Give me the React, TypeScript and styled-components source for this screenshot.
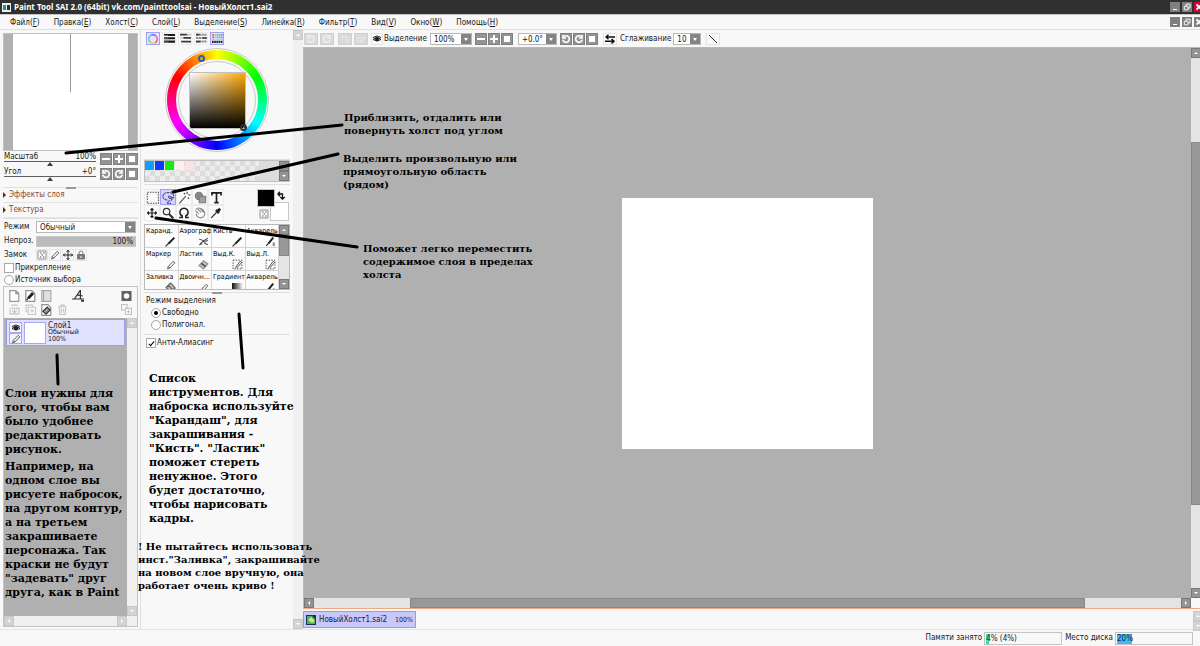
import React from "react";
import styled, { createGlobalStyle, css } from "styled-components";

const ui = `"DejaVu Sans Condensed", "DejaVu Sans", sans-serif`;
const serif = `"DejaVu Serif", serif`;

const Global = createGlobalStyle`
  *, *::before, *::after { box-sizing: border-box; }
  body { margin: 0; background: #f8f8f8; }
  button, input, select { font: inherit; color: inherit; margin: 0; padding: 0; }
  p, h1, h2 { margin: 0; font: inherit; }
  svg { display: block; flex: none; }
`;

const Shell = styled.div`
  position: relative;
  display: flex;
  flex-direction: column;
  min-height: 100vh;
  overflow: hidden;
  background: #f8f8f8;
  color: #202020;
  font: 8px/12px ${ui};
  white-space: nowrap;
`;

const TitleBar = styled.header`
  display: flex;
  align-items: center;
  gap: 3px;
  height: 14px;
  padding-left: 2px;
  background: #303030;
  color: #fff;
  font-family: "Noto Sans", ${ui};
  font-weight: bold;
`;
const WindowButtons = styled.div`
  display: flex;
  gap: 2px;
  margin: 0 -4px 0 auto;
`;
const WindowButton = styled.button<{ $close?: boolean }>`
  width: 10px;
  height: 10px;
  border: 0;
  background: ${(p) => (p.$close ? "#c80838" : "#808080")};
  color: #fff;
`;

const MenuBar = styled.nav`
  display: flex;
  align-items: center;
  height: 16px;
  padding-left: 3px;
  border-top: 1px solid #c4c4c4;
  border-bottom: 1px solid #e0e0e0;
`;
const MenuItem = styled.button`
  padding: 1px 7px 0;
  border: 0;
  background: none;
`;

const Workspace = styled.div`
  display: flex;
  flex: 1;
  border-bottom: 1px solid #e4e4e4;
`;
const LeftColumn = styled.aside`
  display: flex;
  flex-direction: column;
  flex: none;
  width: 141px;
  padding: 3px 2px 2px 3px;
  border-right: 1px solid #e0e0e0;
`;
const ToolColumn = styled.aside`
  display: flex;
  flex: none;
  width: 162px;
`;
const ToolPanel = styled.div`
  flex: 1;
  padding: 2px 3px 0;
`;
const MainColumn = styled.main`
  display: flex;
  flex: 1;
  flex-direction: column;
  min-width: 0;
`;

const Rule = styled.div<{ $handle?: boolean; $m?: string }>`
  display: flex;
  justify-content: center;
  align-items: center;
  height: 1px;
  margin: ${(p) => p.$m ?? "0"};
  background: #e0e0e0;
  ${(p) => p.$handle && css`
    &::after { content: ""; width: 10px; height: 2px; flex: none; background: #989898; }
  `}
`;

const SquareButton = styled.button<{ $tone?: "dark" | "light" | "off"; $wide?: boolean }>`
  display: flex;
  align-items: center;
  justify-content: center;
  flex: none;
  width: ${(p) => (p.$wide ? 14 : 12)}px;
  height: 12px;
  border: 1px solid ${(p) => (p.$tone === "off" ? "#d0d0d0" : p.$tone === "light" ? "#e4e4e4" : "#808080")};
  background: ${(p) => (p.$tone === "off" ? "#dadada" : p.$tone === "light" ? "#fafafa" : "#949494")};
  color: ${(p) => (p.$tone === "off" ? "#eee" : p.$tone === "light" ? "#303030" : "#fff")};
`;

const Navigator = styled.div`
  height: 118px;
  padding: 0 9px;
  border: 1px solid #c0c0c0;
  background: #b0b0b0;
`;
const NavigatorPage = styled.div`
  display: flex;
  justify-content: center;
  height: 100%;
  background: #fff;
  &::after { content: ""; width: 1px; height: 58px; background: #989898; }
`;
const SliderRow = styled.div`
  display: flex;
  gap: 1px;
  height: 15px;
  padding: 2px 0 0 1px;
`;
const Slider = styled.label`
  position: relative;
  display: flex;
  justify-content: space-between;
  flex: 1;
  height: 9px;
  margin-right: 3px;
  border-bottom: 1px solid #606060;
  line-height: 8px;
`;
const SliderInput = styled.input`
  appearance: none;
  position: absolute;
  left: 0;
  top: 9px;
  width: 100%;
  height: 4px;
  background: none;
  &::-webkit-slider-thumb {
    appearance: none;
    width: 6px;
    height: 4px;
    background: #404040;
    clip-path: polygon(50% 0, 100% 100%, 0 100%);
  }
`;
const Fold = styled.button`
  display: flex;
  align-items: center;
  gap: 3px;
  width: 100%;
  height: 15px;
  border: 0;
  border-bottom: 1px solid #e4e4e4;
  background: none;
  color: #904828;
  text-align: left;
  &::before {
    content: "";
    border-left: 3px solid #702810;
    border-top: 3px solid transparent;
    border-bottom: 3px solid transparent;
  }
`;
const Field = styled.label`
  display: grid;
  grid-template-columns: 31px 1fr;
  align-items: center;
  gap: 1px;
  height: 14px;
  padding: 0 2px 0 1px;
`;
const SelectBox = styled.span<{ $w?: number }>`
  position: relative;
  display: flex;
  flex: none;
  width: ${(p) => (p.$w ? `${p.$w}px` : "auto")};
  height: 12px;
  border: 1px solid #b8b8b8;
  background: #fff;
  &::after {
    content: "";
    position: absolute;
    right: 3px;
    top: 4px;
    border-top: 3px solid #fff;
    border-left: 2px solid transparent;
    border-right: 2px solid transparent;
    pointer-events: none;
  }
  select {
    appearance: none;
    width: 100%;
    padding-left: 3px;
    border: 0;
    border-radius: 0;
    background: linear-gradient(#848484, #848484) right / 10px 10px no-repeat;
  }
`;
const OpacityBar = styled.output`
  height: 11px;
  padding-right: 2px;
  border: 1px solid #c8c8c8;
  background: #bcbcbc;
  text-align: right;
  line-height: 9px;
`;
const LockRow = styled.div`
  display: flex;
  align-items: center;
  gap: 1px;
  height: 14px;
  padding-left: 1px;
  > span { width: 31px; }
`;
const Choice = styled.label<{ $indent?: number }>`
  display: flex;
  align-items: center;
  gap: 1px;
  height: 12px;
  padding-left: ${(p) => p.$indent ?? 1}px;
  input {
    appearance: none;
    flex: none;
    display: grid;
    place-items: center;
    width: 10px;
    height: 10px;
    border: 1px solid #a8a8a8;
    background: #fff;
  }
  input[type="radio"] { border-radius: 50%; }
  input[type="radio"]:checked::after {
    content: ""; width: 4px; height: 4px; border-radius: 50%; background: #000;
  }
  input[type="checkbox"]:checked::after {
    content: ""; width: 3px; height: 6px; border: solid #000; border-width: 0 1px 1px 0; transform: rotate(40deg);
  }
`;

const LayerPanel = styled.section`
  display: flex;
  flex: 1;
  flex-direction: column;
  border: 1px solid #c4c4c4;
`;
const LayerTools = styled.div`
  display: grid;
  grid-template-columns: repeat(4, 16px) 16px 1fr;
  align-content: center;
  height: 31px;
  padding: 0 4px 0 3px;
  button:nth-child(4) { grid-column: 5; }
  button:nth-child(5n) { justify-self: end; grid-column: 6; }
`;
const PlainButton = styled.button`
  display: flex;
  align-items: center;
  justify-content: center;
  width: 14px;
  height: 14px;
  border: 0;
  background: none;
`;
const LayerBody = styled.div`
  display: flex;
  flex: 1;
`;
const LayerList = styled.div`
  flex: 1;
  padding: 1px 2px;
  background: #b0b0b0;
`;
const Layer = styled.div`
  display: flex;
  gap: 2px;
  height: 27px;
  padding: 2px;
  border: 1px solid #9c9cec;
  background: #e0e0ff;
`;
const LayerSwitches = styled.div`
  display: flex;
  flex-direction: column;
  button { width: 13px; height: 11px; border: 1px solid #a8a8f0; background: #f4f4ff; }
`;
const Thumb = styled.div`
  width: 22px;
  height: 22px;
  border: 1px solid #a8a8f0;
  background: #fff;
`;
const LayerText = styled.div`
  font-size: 7px;
  line-height: 7px;
  p:first-child { font-size: 8px; }
`;

const Scroll = styled.div<{ $row?: boolean; $active?: boolean }>`
  display: flex;
  flex: none;
  flex-direction: ${(p) => (p.$row ? "row" : "column")};
  justify-content: space-between;
  ${(p) => (p.$row ? "height" : "width")}: 10px;
  background: ${(p) => (p.$active ? "#e4e4e4" : "#f0f0f0")};
`;
const ScrollArrow = styled.button<{ $dir: "up" | "down" | "left" | "right"; $off?: boolean }>`
  flex: none;
  display: grid;
  place-items: center;
  width: 10px;
  height: 10px;
  border: 1px solid ${(p) => (p.$off ? "#c8c8c8" : "#787878")};
  background: ${(p) => (p.$off ? "#d4d4d4" : "#949494")};
  &::after {
    content: "";
    width: 4px;
    height: 2px;
    background: #fff;
    clip-path: polygon(50% 0, 100% 100%, 0 100%);
    transform: rotate(${(p) => ({ up: 0, right: 90, down: 180, left: 270 })[p.$dir]}deg);
  }
`;
const ScrollThumb = styled.div<{ $grow: number }>`
  flex: ${(p) => p.$grow};
  border: 1px solid #888;
  background: #989898;
`;
const ScrollGap = styled.div<{ $grow: number }>`
  flex: ${(p) => p.$grow};
`;

const ColorTabs = styled.div`
  display: flex;
  gap: 2px;
  padding-left: 2px;
`;
const Tab = styled.button<{ $on?: boolean }>`
  display: grid;
  place-items: center;
  width: 14px;
  height: 13px;
  border: 1px solid ${(p) => (p.$on ? "#a0a0f0" : "#ececec")};
  background: ${(p) => (p.$on ? "#e4e4ff" : "#fafafa")};
`;
const Wheel = styled.div`
  position: relative;
  display: grid;
  place-items: center;
  width: 104px;
  height: 104px;
  margin: 3px auto 7px;
  border: 1px solid #c8c8c8;
  border-radius: 50%;
`;
const Hue = styled.div`
  display: grid;
  place-items: center;
  width: 100px;
  height: 100px;
  border-radius: 50%;
  background: conic-gradient(#ff0, #0f0 60deg, #0ff 120deg, #00f 180deg, #f0f 240deg, #f00 300deg, #ff0);
`;
const Hole = styled.div`
  display: grid;
  place-items: center;
  width: 82px;
  height: 82px;
  border: 2px solid #f8f8f8;
  border-radius: 50%;
  background: #f8f8f8;
  outline: 1px solid #c8c8c8;
  outline-offset: -3px;
`;
const Shade = styled.div`
  width: 57px;
  height: 57px;
  border: 1px solid #c0c0c0;
  background: linear-gradient(to top, #000, transparent), linear-gradient(to right, #fff, #ffa800);
`;
const WheelMark = styled.span<{ $x: number; $y: number; $c: string }>`
  position: absolute;
  left: ${(p) => p.$x}px;
  top: ${(p) => p.$y}px;
  width: 7px;
  height: 7px;
  border: 2px solid ${(p) => p.$c};
  border-radius: 50%;
`;
const Palette = styled.div`
  display: flex;
  justify-content: space-between;
  height: 22px;
  border: 1px solid #c0c0c0;
  background: #dcdcdc;
`;
const Swatches = styled.div`
  display: flex;
  width: 114px;
  background: repeating-conic-gradient(#dcdcdc 0 25%, #ececec 0 50%) 0 0 / 10px 10px;
`;
const Swatch = styled.button<{ $c: string }>`
  width: 9px;
  height: 9px;
  margin-right: 1px;
  border: 0;
  background: ${(p) => p.$c};
`;
const Stack = styled.div`
  display: flex;
  flex-direction: column;
`;
const ToolTop = styled.div`
  display: flex;
  justify-content: space-between;
  height: 39px;
  padding-top: 4px;
`;
const ToolGrid = styled.div`
  display: grid;
  grid-template-columns: repeat(5, 16px);
  grid-auto-rows: 16px;
`;
const ToolButton = styled.button<{ $on?: boolean }>`
  display: grid;
  place-items: center;
  width: 16px;
  height: 16px;
  border: 1px solid ${(p) => (p.$on ? "#a0a0f0" : "#ececec")};
  background: ${(p) => (p.$on ? "#d4d4ff" : "#fafafa")};
`;
const InkGrid = styled.div`
  display: grid;
  grid-template-columns: 13px 5px 14px;
  grid-template-rows: 13px 5px 14px;
  margin-right: 1px;
`;
const Ink = styled.button<{ $c: string; $a: string }>`
  grid-area: ${(p) => p.$a};
  border: 1px solid #c8c8c8;
  background: ${(p) => p.$c};
`;
const InkIcon = styled.span<{ $a: string }>`
  grid-area: ${(p) => p.$a};
  place-self: center;
`;
const Brushes = styled.div`
  display: flex;
  height: 66px;
  border: 1px solid #b8b8b8;
  overflow: hidden;
`;
const BrushGrid = styled.div`
  display: grid;
  flex: 1;
  grid-template-columns: repeat(4, 1fr);
  grid-auto-rows: 23px;
`;
const Brush = styled.button`
  display: flex;
  flex-direction: column;
  justify-content: space-between;
  min-width: 0;
  overflow: hidden;
  padding: 2px 1px 0;
  border: solid #d4d4d4;
  border-width: 0 1px 1px 0;
  background: #fcfcfc;
  color: #000;
  font-size: 7px;
  line-height: 9px;
  text-align: left;
  svg { align-self: flex-end; margin-right: 1px; }
`;
const Caption = styled.h2`
  height: 12px;
  margin-top: 2px;
  padding-left: 2px;
`;

const Toolbar = styled.div`
  display: flex;
  align-items: center;
  height: 17px;
  padding-left: 1px;
`;
const Group = styled.div<{ $gap?: number; $mr?: number }>`
  display: flex;
  align-items: center;
  gap: ${(p) => p.$gap ?? 1}px;
  margin-right: ${(p) => p.$mr ?? 5}px;
`;
const CanvasFrame = styled.section`
  display: grid;
  grid-template-columns: 1fr 10px;
  grid-template-rows: 1fr 10px;
  flex: 1;
  margin-right: -2px;
  border: 1px solid #f0a880;
`;
const Desk = styled.div`
  display: flex;
  align-items: center;
  justify-content: center;
  background: #b0b0b0;
`;
const Sheet = styled.div`
  width: 251px;
  height: 251px;
  background: #fff;
`;
const DocTabs = styled.div`
  display: flex;
  justify-content: space-between;
  height: 20px;
  margin-right: -3px;
  padding: 2px 0 1px;
`;
const DocTab = styled.button`
  display: flex;
  align-items: center;
  gap: 3px;
  width: 113px;
  padding: 0 2px;
  border: 1px solid #9898ec;
  background: #c8c8fc;
  span:last-child { margin-left: auto; font-size: 7px; }
`;
const StatusBar = styled.footer`
  display: flex;
  align-items: center;
  justify-content: flex-end;
  gap: 3px;
  height: 16px;
  padding-right: 7px;
`;
const Meter = styled.div`
  display: flex;
  align-items: center;
  gap: 2px;
`;
const MeterBar = styled.div<{ $fill: string; $pct: number }>`
  width: 78px;
  height: 13px;
  padding-left: 1px;
  border: 1px solid #c4c4c4;
  background: linear-gradient(${(p) => p.$fill}, ${(p) => p.$fill}) 1px 1px / ${(p) => p.$pct}% 10px no-repeat;
`;

const Strokes = styled.svg`
  position: absolute;
  left: 0;
  top: 0;
  pointer-events: none;
`;
const Note = styled.div<{ $x: number; $y: number; $big?: boolean }>`
  position: absolute;
  left: ${(p) => p.$x}px;
  top: ${(p) => p.$y}px;
  color: #000;
  font-family: ${serif};
  font-weight: bold;
  font-size: ${(p) => (p.$big ? 11 : 10)}px;
  line-height: ${(p) => (p.$big ? 14 : 13)}px;
  white-space: pre;
  pointer-events: none;
  p + p { margin-top: 3px; }
`;

const S = ({ children, w = 10, h = w, sw = 1, c = "currentColor" }: any) => (
  <svg width={w} height={h} viewBox="0 0 10 10" fill="none" stroke={c} strokeWidth={sw}>{children}</svg>
);
const Minus = () => <S sw={2}><path d="M1 5h8" /></S>;
const Plus = () => <S sw={2}><path d="M1 5h8M5 1v8" /></S>;
const Box = () => <S><path d="M2 2h6v6h-6z" fill="currentColor" stroke="none" /></S>;
const Ccw = () => <S sw={1.6}><path d="M3 2.4a3.3 3.3 0 1 1-1.2 3.4M2 1v3h3" /></S>;
const Cw = () => <S sw={1.6}><path d="M7 2.4a3.3 3.3 0 1 0 1.2 3.4M8 1v3h-3" /></S>;
const Eye = () => (
  <S c="#202020"><path d="M1 5.5Q5 1.5 9 5.5Q5 8.5 1 5.5zM1 3.5Q5 .5 9 3.5" /><circle cx="5" cy="5.2" r="1.6" fill="#202020" /></S>
);
const Pencil = ({ c = "#606060" }: any) => <S c={c}><path d="M1.5 9l.8-2.6L7.2 1.3l1.7 1.5-5 5.2zM2.3 6.4l1.6 1.6" /></S>;
const PenDark = () => <S w={11} c="#202020"><path d="M.5 9.500l2.500-2.500" /><path d="M3 7l5.500-5.500" strokeWidth="1.800" /></S>;
const Move = ({ sw = 1 }: any) => (
  <S c="#202020" sw={sw}><path d="M5 0v10M0 5h10M3.5 2L5 .5 6.500 2M3.500 8L5 9.500 6.500 8M2 3.500L.5 5 2 6.500M8 3.500L9.500 5 8 6.500" /></S>
);
const Checker = () => <S c="#909090"><path d="M1 1h8v8h-8z" /><path d="M3 3h1.500M6 3h1.500M4.500 5h1.500M3 7h1.500M6 7h1.500" strokeWidth="1.500" /></S>;
const Lock = () => <S c="#787878"><path d="M3 5V3a2 2 0 0 1 4 0v2" /><path d="M1.500 4.500h7v4.500h-7z" fill="#787878" /><path d="M5 6v2" stroke="#fff" /></S>;
const Page = ({ f = "#fff" }: any) => <S w={12} c="#989898"><path d="M1.500 .5h5l2.500 2.500v6.500h-7.500zM6.500 .5v2.500h2.500" fill={f} /></S>;
const PagePen = () => <S w={12} c="#909090"><path d="M1.500 .5h5l2.500 2.500v6.500h-7.500z" fill="#fff" /><path d="M2 8.500l1.500-1.500" stroke="#202020" /><path d="M3.500 7l4-4.500" stroke="#202020" strokeWidth="2.400" /></S>;
const PageErase = () => <S w={12} c="#909090"><path d="M1.500 .5h5l2.500 2.500v6.500h-7.500z" fill="#fff" /><path d="M2.500 6L6 2.500 8.500 5 5 8.500z" fill="#989898" stroke="#303030" /></S>;
const Folder = () => <S w={12} c="#a8a8a8"><path d="M1.500 .5h7.500v9h-7.500z" fill="#e0e0e0" /><path d="M3 .5v9" /></S>;
const Ruler = () => <S w={12} c="#303030"><path d="M0 7.500h10M2 7.500L7 0v8M4 4l5 1" /><path d="M7.500 9h2.500" strokeWidth="1.500" /></S>;
const Mask = () => <S w={11} h={10}><path d="M0 0h10v10h-10z" fill="#606060" stroke="none" /><circle cx="5" cy="5" r="2.800" fill="#fff" stroke="none" /></S>;
const DownLayer = () => <S w={11} c="#c4c4c4"><path d="M2 1h6M2 4h2M6 4h3v5h-8v-5M5 3v5M3 6l2 2 2-2" /></S>;
const AddLayer = () => <S w={11} c="#c8c8c8"><path d="M1 1h6v2M1 1v6h2M3 3h6.500v6.500h-6.500zM5 6.200h3M6.300 4.800v3" /></S>;
const Trash = () => <S w={11} c="#c4c4c4"><path d="M1 2.500h8M3.500 2.500v-1.500h3v1.500M2 2.500l.5 7h5l.5-7M4 4v4M6 4v4" /></S>;
const Link2 = () => <S w={11} c="#c0c0c0"><path d="M.5 .5h5v5h-5z" /><path d="M4 4h5.500v5.500h-5.500zM6.800 5.500v3M5.300 7h3" fill="#fff" /></S>;

const RingIcon = () => (
  <S w={12}>
    {["#f55", "#fc4", "#5d5", "#4cf", "#66f", "#f5d"].map((c, i) => (
      <circle key={c} cx="5" cy="5" r="3.600" stroke={c} strokeWidth="1.200" strokeDasharray="3.770 18.850" strokeDashoffset={-3.77 * i} />
    ))}
  </S>
);
const BarsIcon = () => <S w={11} c="#181818"><path d="M0 1.800h10M0 4.800h10M0 7.800h10" strokeWidth="1.900" /><path d="M0 2.300h4M0 5.300h4M0 8.300h4" stroke="#888" strokeWidth=".8" /></S>;
const StairIcon = () => <S w={11} c="#383838"><path d="M0 1.500h5M4 1.500h3M3 4.500h7M1 7.800h9" strokeWidth="1.600" /><path d="M6 1.500h4M0 4.500h3" stroke="#b8b8b8" /></S>;
const MixIcon = () => <S w={11}><path d="M0 1.500h10M0 4.500h10M0 7.800h10" stroke="#888" strokeWidth="1.800" strokeDasharray="2 .5" /><path d="M0 1.500h3M6 4.500h4M0 7.800h4" stroke="#404040" strokeWidth="1.500" /></S>;
const GridIcon = () => (
  <S w={11}>
    {["#d55", "#db5", "#5c5", "#5bd", "#88f"].map((c, i) => <path key={c} d={`M${i * 2 + 1} 1v5`} stroke={c} strokeWidth="1.500" strokeDasharray="1.500 .6" />)}
    <path d="M0 8h10" stroke="#202020" strokeWidth="2" strokeDasharray="1.500 .5" />
  </S>
);

const toolIcons: [string, React.ReactNode][] = [
  ["Прямоугольное выделение", <S w={13} c="#505050" sw={0.8}><path d="M1 1h8.500v8.500h-8.500z" strokeDasharray="1.200 .8" /></S>],
  ["Лассо", <S w={13} c="#484880" sw={0.9}><path d="M4 7Q0 6 .8 3.500T5 1.200T9 3.500T7 5.500Q5 6 5 4.500T7.500 5Q8.500 7 6 7.500T4.500 9.500H7" strokeDasharray="1.800 .5" /></S>],
  ["Волшебная палочка", <S w={13} c="#505050" sw={0.9}><path d="M1 9.500l5-5.500M7 .5v2M9.500 3h-1.500M4.500 1.500l1 1M8.500 6l-1-1" /></S>],
  ["Фигура", <S w={13} c="#787878" sw={0.8}><circle cx="3.800" cy="3.800" r="2.800" fill="#888" /><path d="M4 4h5v5h-5z" fill="#a0a0a0" /></S>],
  ["Текст", <S w={13} c="#202020"><path d="M1.500 3.500v-2h7v2M5 1.500v7.500M3.300 9h3.400" strokeWidth="1.300" /></S>],
  ["Перемещение", <Move sw={1.2} />],
  ["Масштаб", <S w={12} c="#303030"><circle cx="3.800" cy="3.800" r="2.700" /><path d="M6 6l3.500 3.500" strokeWidth="1.800" /></S>],
  ["Поворот", <S w={12} c="#202020" sw={1.3}><path d="M1 8.800h2.500V7.500A3.400 3.400 0 1 1 6.500 7.500V8.800H9" /></S>],
  ["Рука", <S w={12} c="#888" sw={0.9}><path d="M1 3l3 2.500M1.500 2Q3 0 6 1.500T9 6Q8 9.500 5 9T2 5.500M3 1.500l3 3M5 1l3 3.500" /></S>],
  ["Пипетка", <S w={12} c="#202020"><path d="M1 9l4.500-4.500" /><path d="M5 2.500l2.500 2.500M6 4l2.500-2.500" strokeWidth="2.200" /></S>],
];
const Spray = () => <S w={11} c="#505050"><path d="M1 3q3 0 4 2t4 3M2 7q3-3 7-5M1 8l3-1M6 5l3-1" /></S>;
const Eraser = () => <S w={11} c="#909090"><path d="M1 6L5 1.500 9 4.500 5 9z" fill="#c0c0c0" /><path d="M3 4l4 3" stroke="#505050" strokeWidth="1.500" /></S>;
const Sel = () => <S w={11} c="#404040"><path d="M1 1h8v8h-8z" strokeDasharray="1.200 1.200" strokeWidth=".9" /><path d="M3 8l4.500-6L8.800 3.200 4 8.500" strokeWidth=".8" /></S>;
const Bucket = () => <S w={11} c="#606060"><path d="M1 5l4-4 4 4-4 4zM9 5v4M3 3l4 4" fill="#c0c0c0" /></S>;
const Grad = () => <svg width="11" height="11"><defs><linearGradient id="g"><stop stopColor="#111" /><stop offset="1" stopColor="#fff" /></linearGradient></defs><path d="M0 1h11v9H0z" fill="url(#g)" /></svg>;
const Drop = () => <S w={11} c="#202020"><path d="M1 9l2-2" /><path d="M3 7l4.500-5.500" strokeWidth="1.800" /><path d="M8 6q-1.500 2 0 3q1.500-1 0-3" stroke="#888" /></S>;

const brushes: [string, React.ReactNode][] = [
  ["Каранд.", <PenDark />], ["Аэрограф", <Spray />], ["Кисть", <PenDark />], ["Акварель", <Drop />],
  ["Маркер", <Pencil />], ["Ластик", <Eraser />], ["Выд.К.", <Sel />], ["Выд.Л.", <Sel />],
  ["Заливка", <Bucket />], ["Двоичн...", <Pencil />], ["Градиент", <Grad />], ["Акварель", <Drop />],
];
const menu = [
  ["Файл", "F"], ["Правка", "E"], ["Холст", "C"], ["Слой", "L"], ["Выделение", "S"], ["Линейка", "R"],
  ["Фильтр", "T"], ["Вид", "V"], ["Окно", "W"], ["Помощь", "H"],
];

const WinIcons = () => (
  <>
    <WindowButton aria-label="Свернуть"><S><path d="M3 7.500h4" /></S></WindowButton>
    <WindowButton aria-label="Восстановить"><S sw={0.9}><path d="M4 4v-1.800h4v3.800h-2M2.300 4.300h3.700v3.500h-3.700z" /></S></WindowButton>
  </>
);
const CloseIcon = () => <S sw={1.8}><path d="M2.500 2.500l5 5M7.500 2.500l-5 5" /></S>;
const Trio = () => <><SquareButton aria-label="Меньше"><Minus /></SquareButton><SquareButton aria-label="Больше"><Plus /></SquareButton><SquareButton aria-label="Сброс"><Box /></SquareButton></>;
const Turn = () => <><SquareButton aria-label="Влево"><Ccw /></SquareButton><SquareButton aria-label="Вправо"><Cw /></SquareButton><SquareButton aria-label="Сброс угла"><Box /></SquareButton></>;

export default function App() {
  return (
    <Shell>
      <Global />
      <TitleBar>
        <svg width="9" height="9"><path d="M0 0h9v9H0z" fill="#e8f0f0" /><path d="M1 2h3v5H1z" fill="#408878" /><path d="M5 2h3v5H5z" fill="#303030" /></svg>
        <h1>Paint Tool SAI 2.0 (64bit) vk.com/painttoolsai - НовыйХолст1.sai2</h1>
        <WindowButtons><WinIcons /><WindowButton $close aria-label="Закрыть"><CloseIcon /></WindowButton></WindowButtons>
      </TitleBar>
      <MenuBar>
        {menu.map(([t, k]) => <MenuItem key={t}>{t}(<u>{k}</u>)</MenuItem>)}
        <WindowButtons><WinIcons /><WindowButton aria-label="Закрыть документ"><CloseIcon /></WindowButton></WindowButtons>
      </MenuBar>

      <Workspace>
        <LeftColumn>
          <Navigator><NavigatorPage /></Navigator>
          <SliderRow>
            <Slider><span>Масштаб</span><span>100%</span><SliderInput type="range" /></Slider>
            <Trio />
          </SliderRow>
          <SliderRow>
            <Slider><span>Угол</span><span>+0°</span><SliderInput type="range" /></Slider>
            <Turn />
          </SliderRow>
          <Rule $handle $m="6px 0 0" />
          <Fold>Эффекты слоя</Fold>
          <Fold>Текстура</Fold>
          <Rule $m="0 0 1px" />
          <Field><span>Режим</span><SelectBox><select defaultValue="n"><option value="n">Обычный</option></select></SelectBox></Field>
          <Field><span>Непроз.</span><OpacityBar>100%</OpacityBar></Field>
          <LockRow>
            <span>Замок</span>
            <SquareButton $tone="light" aria-label="Прозрачность"><Checker /></SquareButton>
            <SquareButton $tone="light" aria-label="Рисование"><Pencil /></SquareButton>
            <SquareButton $tone="light" aria-label="Сдвиг"><Move /></SquareButton>
            <SquareButton $tone="light" aria-label="Всё"><Lock /></SquareButton>
          </LockRow>
          <Choice><input type="checkbox" />Прикрепление</Choice>
          <Choice><input type="radio" name="src" />Источник выбора</Choice>

          <LayerPanel>
            <LayerTools>
              <PlainButton aria-label="Новый слой"><Page /></PlainButton>
              <PlainButton aria-label="Линейный слой"><PagePen /></PlainButton>
              <PlainButton aria-label="Папка"><Folder /></PlainButton>
              <PlainButton aria-label="Линейка"><Ruler /></PlainButton>
              <PlainButton aria-label="Маска"><Mask /></PlainButton>
              <PlainButton aria-label="Перенести вниз"><DownLayer /></PlainButton>
              <PlainButton aria-label="Объединить"><AddLayer /></PlainButton>
              <PlainButton aria-label="Очистить"><PageErase /></PlainButton>
              <PlainButton aria-label="Удалить"><Trash /></PlainButton>
              <PlainButton aria-label="Связать"><Link2 /></PlainButton>
            </LayerTools>
            <LayerBody>
              <LayerList>
                <Layer>
                  <LayerSwitches>
                    <SquareButton aria-label="Видимость"><Eye /></SquareButton>
                    <SquareButton aria-label="Правка"><Pencil /></SquareButton>
                  </LayerSwitches>
                  <Thumb />
                  <LayerText><p>Слой1</p><p>Обычный</p><p>100%</p></LayerText>
                </Layer>
              </LayerList>
              <Scroll><ScrollArrow $dir="up" $off aria-label="Вверх" /><ScrollArrow $dir="down" $off aria-label="Вниз" /></Scroll>
            </LayerBody>
            <Scroll $row>
              <ScrollArrow $dir="left" $off aria-label="Влево" />
              <ScrollGap $grow={1} />
              <ScrollArrow $dir="right" $off aria-label="Вправо" />
              <Scroll />
            </Scroll>
          </LayerPanel>
        </LeftColumn>

        <ToolColumn>
          <ToolPanel>
            <ColorTabs>
              <Tab $on aria-label="Круг"><RingIcon /></Tab>
              <Tab aria-label="RGB"><BarsIcon /></Tab>
              <Tab aria-label="HSV"><StairIcon /></Tab>
              <Tab aria-label="Смешение"><MixIcon /></Tab>
              <Tab $on aria-label="Палитра"><GridIcon /></Tab>
            </ColorTabs>
            <Wheel>
              <Hue><Hole><Shade /></Hole></Hue>
              <WheelMark $x={32} $y={6} $c="#2858c0" />
              <WheelMark $x={74} $y={75} $c="#303030" />
            </Wheel>
            <Rule />
            <Palette>
              <Swatches>{["#10a0ff", "#1038ff", "#10f010", "#fff0f0", "#ffe0e0"].map((c) => <Swatch key={c} $c={c} aria-label={c} />)}</Swatches>
              <Stack><ScrollArrow $dir="up" aria-label="Вверх" /><ScrollArrow $dir="down" aria-label="Вниз" /></Stack>
            </Palette>
            <Rule $m="2px 0 0" />
            <ToolTop>
              <ToolGrid>{toolIcons.map(([n, icon], i) => <ToolButton key={n} aria-label={n} $on={i === 1}>{icon}</ToolButton>)}</ToolGrid>
              <InkGrid>
                <Ink $c="#fff" $a="2 / 2 / 4 / 4" aria-label="Фон" />
                <Ink $c="#000" $a="1 / 1 / 3 / 3" aria-label="Цвет" />
                <InkIcon $a="1 / 3"><S c="#101010" sw={1.3}><path d="M1 3h4.500v4.500M3 .8L.8 3 3 5.200M3.300 6l2.200 2.200L7.700 6" /></S></InkIcon>
                <InkIcon $a="3 / 1"><Checker /></InkIcon>
              </InkGrid>
            </ToolTop>
            <Brushes>
              <BrushGrid>{brushes.map(([n, icon], i) => <Brush key={i}><span>{n}</span>{icon}</Brush>)}</BrushGrid>
              <Scroll $active>
                <ScrollArrow $dir="up" aria-label="Вверх" />
                <ScrollThumb $grow={5} /><ScrollGap $grow={6} />
                <ScrollArrow $dir="down" aria-label="Вниз" />
              </Scroll>
            </Brushes>
            <Rule $handle $m="2px 0 0" />
            <Caption>Режим выделения</Caption>
            <Choice $indent={7}><input type="radio" name="sel" defaultChecked />Свободно</Choice>
            <Choice $indent={7}><input type="radio" name="sel" />Полигонал.</Choice>
            <Rule $m="3px 0 2px" />
            <Choice $indent={2}><input type="checkbox" defaultChecked />Анти-Алиасинг</Choice>
          </ToolPanel>
          <Scroll><ScrollArrow $dir="up" $off aria-label="Вверх" /><ScrollArrow $dir="down" $off aria-label="Вниз" /></Scroll>
        </ToolColumn>

        <MainColumn>
          <Toolbar>
            <Group $gap={2} $mr={4}><SquareButton $wide $tone="off" aria-label="Отменить"><Ccw /></SquareButton><SquareButton $wide $tone="off" aria-label="Повторить"><Cw /></SquareButton></Group>
            <Group $gap={2} $mr={3}><SquareButton $wide $tone="off" aria-label="Снять"><S><path d="M2 3h6M6 5l3 3" /></S></SquareButton><SquareButton $wide $tone="off" aria-label="Инвертировать"><S><path d="M1 4h8M3 7h4" /></S></SquareButton></Group>
            <Group $mr={3}><SquareButton $tone="light" aria-label="Показать выделение"><Eye /></SquareButton>Выделение</Group>
            <Group $gap={3}><SelectBox $w={42}><select aria-label="Масштаб"><option>100%</option></select></SelectBox><Group $mr={0}><Trio /></Group></Group>
            <Group $gap={3}><SelectBox $w={39}><select aria-label="Угол"><option>+0.0°</option></select></SelectBox><Group $mr={0}><Turn /></Group></Group>
            <Group $mr={3}><SquareButton $wide $tone="light" aria-label="Отразить"><S c="#101010" sw={1.5}><path d="M1 3h9M3.500 .8L1 3l2.500 2.200M0 7.200h9M6.500 5L9 7.200 6.500 9.500" /></S></SquareButton></Group>
            <Group $gap={2}><label htmlFor="smooth">Сглаживание</label><SelectBox $w={28}><select id="smooth"><option>10</option></select></SelectBox></Group>
            <SquareButton $wide $tone="light" aria-label="Прямая"><S c="#303030"><path d="M1 1l8 8" /></S></SquareButton>
          </Toolbar>
          <CanvasFrame>
            <Desk><Sheet /></Desk>
            <Scroll $active>
              <ScrollArrow $dir="up" aria-label="Вверх" />
              <ScrollGap $grow={84} /><ScrollThumb $grow={363} /><ScrollGap $grow={83} />
              <ScrollArrow $dir="down" aria-label="Вниз" />
            </Scroll>
            <Scroll $row $active>
              <ScrollArrow $dir="left" aria-label="Влево" />
              <ScrollGap $grow={96} /><ScrollThumb $grow={676} /><ScrollGap $grow={96} />
              <ScrollArrow $dir="right" aria-label="Вправо" />
            </Scroll>
          </CanvasFrame>
          <DocTabs>
            <DocTab>
              <svg width="10" height="10"><path d="M0 0h10v10H0z" fill="#183848" /><path d="M1 1h5l3 3v5H1z" fill="#38b868" /><path d="M2 5l3-3 4 4-3 2z" fill="#e8e060" /></svg>
              <span>НовыйХолст1.sai2</span><span>100%</span>
            </DocTab>
            <Stack><ScrollArrow $dir="up" $off aria-label="Вверх" /><ScrollArrow $dir="down" $off aria-label="Вниз" /></Stack>
          </DocTabs>
        </MainColumn>
      </Workspace>

      <StatusBar>
        <Meter><span>Памяти занято</span><MeterBar $fill="#40e0a0" $pct={4}>4% (4%)</MeterBar></Meter>
        <Meter><span>Место диска</span><MeterBar $fill="#40b8ff" $pct={20}>20%</MeterBar></Meter>
      </StatusBar>

      <Strokes width="360" height="400" fill="none" stroke="#000" strokeWidth="3" strokeLinecap="round" aria-hidden="true">
        <path d="M66 153L342 125M173 192L338 154M156 218L357 247" />
        <path d="M57 355L58 384M239 314L243 368" />
      </Strokes>
      <Note $x={344} $y={111}>{"Приблизить, отдалить или\nповернуть холст под углом"}</Note>
      <Note $x={343} $y={152}>{"Выделить произвольную или\nпрямоугольную область\n(рядом)"}</Note>
      <Note $x={363} $y={242}>{"Поможет легко переместить\nсодержимое слоя в пределах\nхолста"}</Note>
      <Note $x={5} $y={387} $big>
        <p>{"Слои нужны для\nтого, чтобы вам\nбыло удобнее\nредактировать\nрисунок."}</p>
        <p>{"Например, на\nодном слое вы\nрисуете набросок,\nна другом контур,\nа на третьем\nзакрашиваете\nперсонажа. Так\nкраски не будут\n\"задевать\" друг\nдруга, как в Paint"}</p>
      </Note>
      <Note $x={149} $y={372} $big>{"Список\nинструментов. Для\nнаброска используйте\n\"Карандаш\", для\nзакрашивания -\n\"Кисть\". \"Ластик\"\nпоможет стереть\nненужное. Этого\nбудет достаточно,\nчтобы нарисовать\nкадры."}</Note>
      <Note $x={138} $y={540}>{"! Не пытайтесь использовать\nинст.\"Заливка\", закрашивайте\nна новом слое вручную, она\nработает очень криво !"}</Note>
    </Shell>
  );
}
